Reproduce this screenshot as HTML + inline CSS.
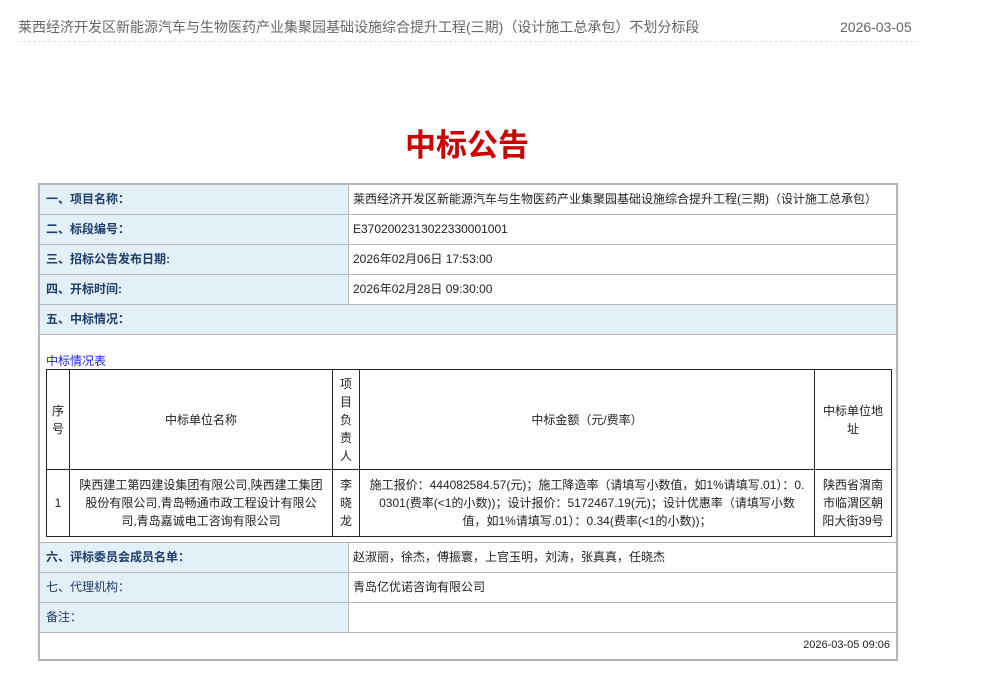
<!DOCTYPE html>
<html><head><meta charset="utf-8"><style>
*{margin:0;padding:0;box-sizing:border-box}
body{width:994px;height:690px;background:#fff;font-family:"Liberation Sans","Noto Sans CJK SC",sans-serif;position:relative;overflow:hidden}
.a{position:absolute;white-space:nowrap}
.hd{top:18px;font-size:14px;color:#666;line-height:18px}
.line{position:absolute;left:18px;top:41px;width:900px;border-top:1px dashed #ddd}
.ttl{left:0;width:934px;top:126px;text-align:center;font-size:31px;font-weight:bold;color:#cc0000;line-height:40px}
.box{position:absolute;left:38px;top:183px;width:860px;height:478px;border:2px solid #b4b4b4}
.r{position:absolute;left:0;width:856px;height:30px;border-bottom:1px solid #b4b4b4}
.l{position:absolute;left:0;top:0;width:309px;height:29px;background:#e4f0f8;border-right:1px solid #b4b4b4;font-size:12px;color:#1e3d6b;line-height:29px;padding-left:6px}
.b{font-weight:bold}
.v{position:absolute;left:313px;top:0;font-size:12px;color:#222;line-height:29px}
table{position:absolute;left:6px;top:184px;border-collapse:collapse;font-size:12px;color:#222;line-height:18px}
td{border:1.5px solid #222;text-align:center;vertical-align:middle}
</style></head><body>
<div class="a hd" style="left:18px">莱西经济开发区新能源汽车与生物医药产业集聚园基础设施综合提升工程(三期)（设计施工总承包）不划分标段</div>
<div class="a hd" style="left:840px">2026-03-05</div>
<div class="line"></div>
<div class="a ttl">中标公告</div>
<div class="box">
<div class="r" style="top:0"><div class="l b">一、项目名称：</div><div class="v">莱西经济开发区新能源汽车与生物医药产业集聚园基础设施综合提升工程(三期)（设计施工总承包）</div></div>
<div class="r" style="top:30px"><div class="l b">二、标段编号：</div><div class="v">E3702002313022330001001</div></div>
<div class="r" style="top:60px"><div class="l b">三、招标公告发布日期:</div><div class="v">2026年02月06日 17:53:00</div></div>
<div class="r" style="top:90px"><div class="l b">四、开标时间:</div><div class="v">2026年02月28日 09:30:00</div></div>
<div class="r" style="top:120px"><div class="l b" style="width:856px;border-right:0">五、中标情况：</div></div>
<div class="a" style="left:6px;top:167px;font-size:12px;color:#1a1aff">中标情况表</div>
<table>
<tr style="height:100px"><td style="width:23px">序<br>号</td><td style="width:263px">中标单位名称</td><td style="width:27px">项<br>目<br>负<br>责<br>人</td><td style="width:455px">中标金额（元/费率）</td><td style="width:77px">中标单位地<br>址</td></tr>
<tr style="height:67px"><td>1</td><td>陕西建工第四建设集团有限公司,陕西建工集团<br>股份有限公司,青岛畅通市政工程设计有限公<br>司,青岛嘉诚电工咨询有限公司</td><td>李<br>晓<br>龙</td><td>施工报价：444082584.57(元)；施工降造率（请填写小数值，如1%请填写.01）：0.<br>0301(费率(&lt;1的小数))；设计报价：5172467.19(元)；设计优惠率（请填写小数<br>值，如1%请填写.01）：0.34(费率(&lt;1的小数))；</td><td>陕西省渭南<br>市临渭区朝<br>阳大街39号</td></tr>
</table>
<div class="r" style="top:357px;border-top:1px solid #b4b4b4;height:31px"><div class="l b">六、评标委员会成员名单：</div><div class="v">赵淑丽，徐杰，傅振寰，上官玉明，刘涛，张真真，任晓杰</div></div>
<div class="r" style="top:388px"><div class="l">七、代理机构：</div><div class="v">青岛亿优诺咨询有限公司</div></div>
<div class="r" style="top:418px"><div class="l">备注：</div></div>
<div class="a" style="right:6px;top:454px;font-size:11px;color:#222">2026-03-05 09:06</div>
</div>
</body></html>
